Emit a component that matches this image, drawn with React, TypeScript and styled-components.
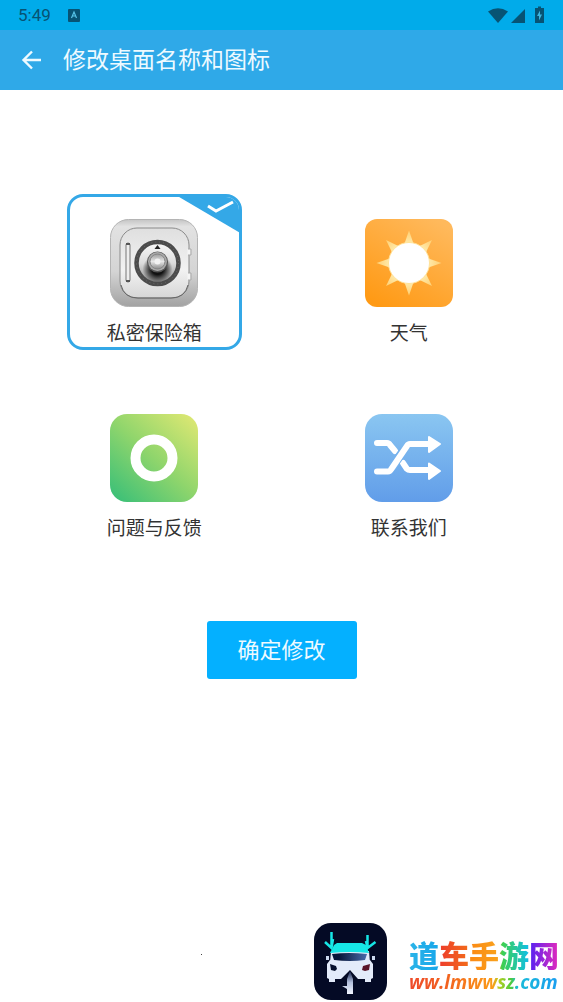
import React, { useState } from 'react';
import styled, { createGlobalStyle } from 'styled-components';

const GlobalStyle = createGlobalStyle`
  * { box-sizing: border-box; }
  body {
    margin: 0;
    background: #fff;
    color: #333;
    font-family: "Noto Sans CJK SC", "Noto Sans", sans-serif;
  }
`;

const Page = styled.div`
  display: flex;
  flex-direction: column;
  min-height: 100vh;
`;

const StatusBar = styled.div`
  display: flex;
  align-items: center;
  height: 30px;
  padding: 0 18px;
  background: #01abea;
  color: #075374;
  font: 400 17px/30px Roboto, sans-serif;
`;

const StatusIcons = styled.div`
  display: flex;
  align-items: center;
  margin-left: auto;
`;

const KeyboardIcon = styled.svg`
  margin-left: 17px;
`;

const AppBar = styled.header`
  display: flex;
  align-items: center;
  height: 60px;
  padding: 0 20px;
  background: #2fa9e8;
`;

const BackButton = styled.button`
  display: flex;
  padding: 0;
  border: 0;
  background: none;
  cursor: pointer;
`;

const Title = styled.h1`
  margin: 0;
  padding: 0 0 4px 19px;
  color: #eefaff;
  font-size: 23px;
  font-weight: 400;
  line-height: 32px;
`;

const Form = styled.form`
  display: flex;
  flex-direction: column;
  align-items: center;
  padding-top: 104px;
`;

const Options = styled.fieldset`
  display: grid;
  grid-template-columns: 1fr 1fr;
  justify-items: center;
  row-gap: 39px;
  width: 100%;
  margin: 0;
  padding: 0 27px;
  border: 0;
`;

const Option = styled.label<{ $selected: boolean }>`
  position: relative;
  display: flex;
  flex-direction: column;
  align-items: center;
  width: 175px;
  height: 156px;
  padding-top: 22px;
  border: 3px solid ${(p) => (p.$selected ? '#34a8e7' : 'transparent')};
  border-radius: 16px;
  overflow: hidden;
  cursor: pointer;
`;

const Radio = styled.input`
  position: absolute;
  opacity: 0;
`;

const Ribbon = styled.svg`
  position: absolute;
  top: -3px;
  right: -3px;
`;

const OptionName = styled.span`
  margin-top: 11px;
  font-size: 19px;
  line-height: 28px;
`;

const Confirm = styled.button`
  width: 150px;
  height: 58px;
  margin-top: 76px;
  padding: 0 0 4px;
  border: 0;
  border-radius: 3px;
  background: #04b0ff;
  color: #eefaff;
  font-family: inherit;
  font-size: 22px;
  line-height: 32px;
  cursor: pointer;
`;

const Footer = styled.footer`
  display: flex;
  align-items: center;
  justify-content: flex-end;
  margin-top: auto;
  padding: 0 4px 2px 0;
`;

const Dot = styled.span`
  width: 1px;
  height: 1px;
  margin: 0 112px 15px 0;
  background: #444;
`;

const Brand = styled.div`
  display: flex;
  flex-direction: column;
  width: 150px;
  margin-left: 22px;
  padding-top: 8px;
`;

const BrandName = styled.span`
  background: linear-gradient(
    90deg,
    #2bb4e8 0, #18a7ea 19%, #ee3f2b 21%, #f2691b 39%, #fb8a15 41%, #f9a11c 59%,
    #3fd04f 62%, #12bfe0 79%, #5a22f0 81%, #e52abb 100%
  );
  background-clip: text;
  -webkit-background-clip: text;
  color: transparent;
  font-size: 30px;
  font-weight: 900;
  line-height: 32px;
  white-space: nowrap;
`;

const BrandUrl = styled.a`
  background: linear-gradient(
    90deg,
    #ee4a2b 0, #f2621f 25%, #fb9c18 56%, #b4cf20 60%, #4ecb3c 68%, #19bcd8 72%, #1a9df0 100%
  );
  background-clip: text;
  -webkit-background-clip: text;
  color: transparent;
  font: italic 700 19px/24px "Open Sans", sans-serif;
  text-decoration: none;
  white-space: nowrap;
`;

const SafeIcon = () => (
  <svg width="88" height="88" viewBox="0 0 88 88" aria-hidden="true">
    <defs>
      <linearGradient id="safeBody" x1="0" y1="0" x2="0" y2="1">
        <stop offset="0" stopColor="#c4c4c4" />
        <stop offset=".08" stopColor="#e2e2e2" />
        <stop offset=".6" stopColor="#d4d4d4" />
        <stop offset="1" stopColor="#a2a2a2" />
      </linearGradient>
      <linearGradient id="safeDoor" x1="0" y1="0" x2="0" y2="1">
        <stop offset="0" stopColor="#dfdfdf" />
        <stop offset=".6" stopColor="#f2f2f2" />
        <stop offset="1" stopColor="#d6d6d6" />
      </linearGradient>
      <linearGradient id="safeDial" x1="0" y1="0" x2="0" y2="1">
        <stop offset="0" stopColor="#fafafa" />
        <stop offset=".5" stopColor="#dcdcdc" />
        <stop offset="1" stopColor="#888" />
      </linearGradient>
      <radialGradient id="safeShade">
        <stop offset=".4" stopColor="#111" />
        <stop offset="1" stopColor="#111" stopOpacity="0" />
      </radialGradient>
      <linearGradient id="safeKnob" x1="0" y1="0" x2="0" y2="1">
        <stop offset="0" stopColor="#999" />
        <stop offset=".5" stopColor="#e8e8e8" />
        <stop offset="1" stopColor="#8c8c8c" />
      </linearGradient>
      <clipPath id="dialClip"><circle cx="47.500" cy="44" r="19" /></clipPath>
    </defs>
    <rect x=".5" y=".5" width="87" height="87" rx="18" fill="url(#safeBody)" stroke="#b4b4b4" />
    <rect x="10" y="9" width="69" height="70" rx="17" fill="url(#safeDoor)" stroke="#8a8a8a" />
    <path d="M11 66q3 13 17 13h33q14 0 17-13" fill="none" stroke="#666" />
    <rect x="16" y="24" width="4" height="39" rx="2" fill="#eee" stroke="#777" />
    <path d="M16 25h4M16 62h4" stroke="#555" strokeWidth="2" />
    <path d="M79 30v6M79 54v7" stroke="#f5f5f5" strokeWidth="3" />
    <path d="M78 30h3v6h-3M78 54h3v7h-3" fill="none" stroke="#aaa" />
    <circle cx="47.500" cy="44" r="21" fill="url(#safeDial)" stroke="#4c4c4c" strokeWidth="4.500" />
    <circle cx="47.500" cy="44" r="21" fill="none" stroke="#6c6c6c" strokeDasharray="1 3" />
    <g clipPath="url(#dialClip)">
      <ellipse cx="47.500" cy="50" rx="15" ry="14" fill="url(#safeShade)" />
    </g>
    <path d="M47.500 26l3 4h-6z" fill="#222" />
    <circle cx="47.500" cy="43" r="10.500" fill="#555" />
    <circle cx="47.500" cy="42.500" r="9.500" fill="#aaa" />
    <circle cx="47.500" cy="42.500" r="7.500" fill="url(#safeKnob)" stroke="#858585" />
    <circle cx="47.500" cy="42.500" r="3" fill="#f2f2f2" />
  </svg>
);

const SunIcon = () => (
  <svg width="88" height="88" viewBox="0 0 88 88" aria-hidden="true">
    <defs>
      <linearGradient id="sunBg" x1=".8" y1="0" x2=".2" y2="1">
        <stop offset="0" stopColor="#ffb95c" />
        <stop offset="1" stopColor="#ff9a15" />
      </linearGradient>
      <linearGradient id="ray" x1="0" y1="0" x2="0" y2="1">
        <stop offset="0" stopColor="#ffcf72" />
        <stop offset="1" stopColor="#ffedb0" />
      </linearGradient>
    </defs>
    <rect width="88" height="88" rx="12" fill="url(#sunBg)" />
    {[0, 45, 90, 135, 180, 225, 270, 315].map((a) => (
      <path key={a} d="M44 11.500l5 14.500h-10z" fill="url(#ray)" transform={`rotate(${a} 44 44)`} />
    ))}
    <circle cx="44" cy="44" r="20.500" fill="#fff" stroke="#ffe39a" />
  </svg>
);

const RingIcon = () => (
  <svg width="88" height="88" viewBox="0 0 88 88" aria-hidden="true">
    <defs>
      <linearGradient id="ringBg" x1=".95" y1="0" x2=".05" y2="1">
        <stop offset="0" stopColor="#dfe873" />
        <stop offset=".5" stopColor="#8fd56c" />
        <stop offset="1" stopColor="#38bf78" />
      </linearGradient>
    </defs>
    <rect width="88" height="88" rx="17" fill="url(#ringBg)" />
    <circle cx="44" cy="44" r="18.500" fill="none" stroke="#fff" strokeWidth="10" />
  </svg>
);

const ShuffleIcon = () => (
  <svg width="88" height="88" viewBox="0 0 88 88" aria-hidden="true">
    <defs>
      <linearGradient id="shuffleBg" x1="0" y1="0" x2="0" y2="1">
        <stop offset="0" stopColor="#8ac6f1" />
        <stop offset="1" stopColor="#619de9" />
      </linearGradient>
    </defs>
    <rect width="88" height="88" rx="17" fill="url(#shuffleBg)" />
    <g fill="none" stroke="#fff" strokeWidth="6" strokeLinecap="round" strokeLinejoin="round">
      <path d="M12 29h10q2 0 3 2l5 6M38 49l4 6q1 1 3 1h20" />
      <path d="M27 53L39 36" stroke="#76b2ed" strokeWidth="9" strokeLinecap="butt" />
      <path d="M12 57.500h11q2 0 3-2L42 32q1-2 3-2h20" />
    </g>
    <path d="M64 23l11 7-11 8zM64 49.500l11 7.500-11 8z" fill="#fff" stroke="#fff" strokeWidth="2" strokeLinejoin="round" />
  </svg>
);

const CarLogo = () => (
  <svg width="73" height="77" viewBox="0 0 73 77" aria-hidden="true">
    <defs>
      <linearGradient id="glass" x1="0" y1="0" x2="1" y2="0">
        <stop offset=".2" stopColor="#07153a" />
        <stop offset="1" stopColor="#4a6cab" />
      </linearGradient>
      <linearGradient id="road" x1="0" y1="0" x2="0" y2="1">
        <stop offset="0" stopColor="#16234d" />
        <stop offset=".5" stopColor="#b3c0dd" />
        <stop offset="1" stopColor="#f2f6ff" />
      </linearGradient>
    </defs>
    <rect width="73" height="77" rx="17" fill="#040a25" />
    <path d="M16 40l1-12h38l1 12z" fill="#e3ebfa" />
    <path d="M23 20h25l4 2 3 8q-19-2-39 0l4-8z" fill="#16e6e6" />
    <path d="M18 31q17-2 35 0l-2 6q-15 2-31 0z" fill="url(#glass)" />
    <path d="M12 33h3v4h-3zM58 33h3v4h-3z" fill="#cddaf0" />
    <path d="M16 37q20 3 40 0l3 4v14l-2 1v3h-6v-3h-7l-8-9-9 9h-6v3h-6v-3l-2-1V41z" fill="#e3ebfa" />
    <path d="M16 41l6 2 1 3-2 2-4-1z" fill="#07102e" />
    <path d="M56 41l-7 2-1 4 3 1 4-1z" fill="#5a1528" />
    <path d="M36 48l3 8v15h-6v-5l-5-3h5v-7z" fill="url(#road)" />
    <path d="M17.500 9v15M11 19l6.500 6 1.500-9M53.500 12v12M52 18l1.500 7 8-6" fill="none" stroke="#16e6e6" strokeWidth="2.500" />
  </svg>
);

const OPTIONS = [
  { name: '私密保险箱', Icon: SafeIcon },
  { name: '天气', Icon: SunIcon },
  { name: '问题与反馈', Icon: RingIcon },
  { name: '联系我们', Icon: ShuffleIcon },
];

export default function App() {
  const [selected, setSelected] = useState(OPTIONS[0].name);
  return (
    <Page>
      <GlobalStyle />
      <StatusBar>
        5:49
        <KeyboardIcon width="12" height="13" viewBox="0 0 12 13" aria-hidden="true">
          <rect width="12" height="13" rx="1" fill="#075374" />
          <path d="M3.500 9L6 3l2.500 6M4.500 7h3" fill="none" stroke="#56c3e8" strokeWidth="1.200" />
        </KeyboardIcon>
        <StatusIcons>
          <svg width="57" height="18" viewBox="0 0 57 18" fill="#075374" aria-hidden="true">
            <path d="M0 5.500Q10 -1 20 5.500L10 17z" />
            <path d="M37 3v14H23z" />
            <path d="M47 2h3V.5h3V2h3v15h-9V2z" />
            <path d="M52 4.500L49 10h2v4.500l3-6h-2z" fill="#3cb5e0" />
          </svg>
        </StatusIcons>
      </StatusBar>
      <AppBar>
        <BackButton type="button" aria-label="返回">
          <svg width="24" height="24" viewBox="0 0 24 24" fill="none" stroke="#eefaff" strokeWidth="2.400" aria-hidden="true">
            <path d="M21 12H4M12 3.500L3.500 12l8.500 8.500" />
          </svg>
        </BackButton>
        <Title>修改桌面名称和图标</Title>
      </AppBar>
      <Form onSubmit={(e) => e.preventDefault()}>
        <Options aria-label="图标">
          {OPTIONS.map(({ name, Icon }) => (
            <Option key={name} $selected={name === selected}>
              <Radio type="radio" name="icon" checked={name === selected} onChange={() => setSelected(name)} />
              <Icon />
              <OptionName>{name}</OptionName>
              {name === selected && (
                <Ribbon width="68" height="40" viewBox="0 0 68 40" aria-hidden="true">
                  <path d="M0 0h68v40z" fill="#34a8e7" />
                  <path d="M34 12l8 5L59 8" fill="none" stroke="#fff" strokeWidth="3" />
                </Ribbon>
              )}
            </Option>
          ))}
        </Options>
        <Confirm type="submit">确定修改</Confirm>
      </Form>
      <Footer>
        <Dot />
        <CarLogo />
        <Brand>
          <BrandName>道车手游网</BrandName>
          <BrandUrl href="#">ww.lmwwsz.com</BrandUrl>
        </Brand>
      </Footer>
    </Page>
  );
}
